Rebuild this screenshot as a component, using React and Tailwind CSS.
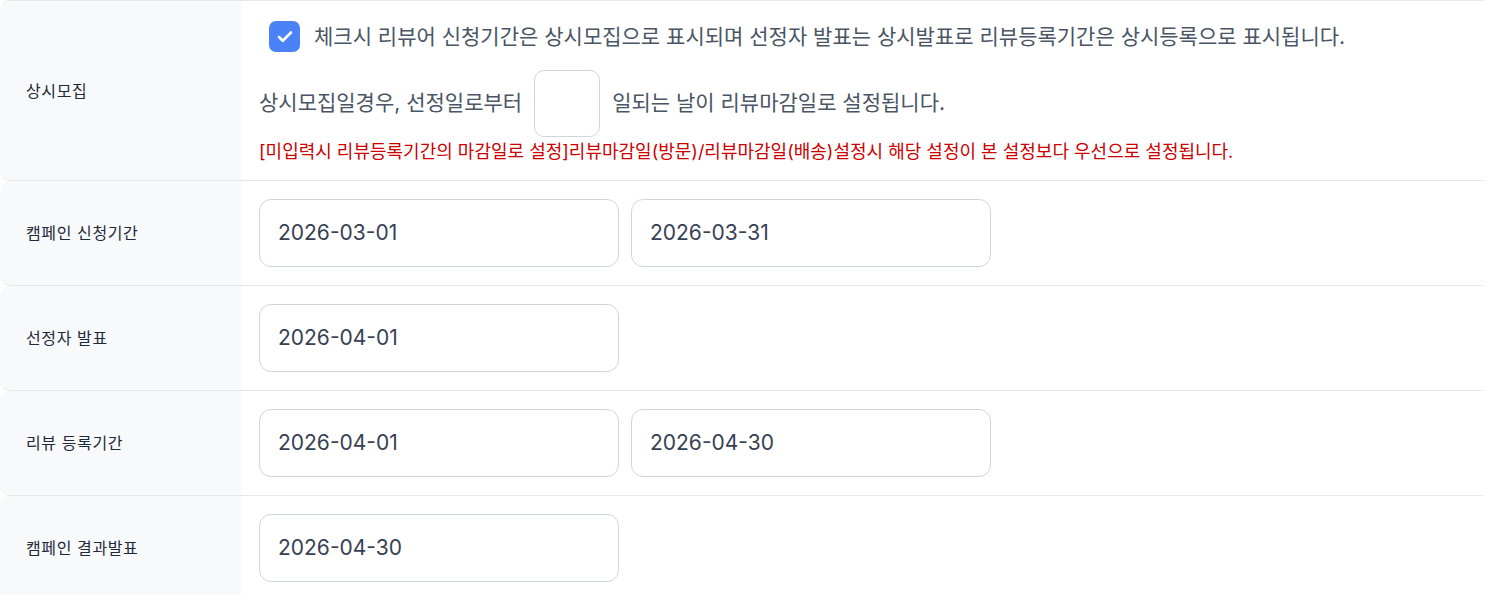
import { Check } from 'lucide-react'

const font = { fontFamily: 'Inter, "Noto Sans CJK KR", sans-serif' }

function DateBox({ value }) {
  return (
    <div className="w-[360px] h-[68px] flex items-center pl-[18px] border border-gray-300 rounded-xl bg-white text-[21px] text-gray-700">
      {value}
    </div>
  )
}

function Row({ label, children, first }) {
  return (
    <div className={`flex rounded-[10px] border-b border-gray-200 ${first ? 'border-t' : ''}`}>
      <div className="w-[241px] shrink-0 bg-[#f8f9fb] rounded-l-[10px] flex items-center pl-[26px] text-[16px] tracking-[0.6px] text-gray-800">
        {label}
      </div>
      <div className="flex-1 bg-white">{children}</div>
    </div>
  )
}

export default function App() {
  const dates = [
    { label: '캠페인 신청기간', values: ['2026-03-01', '2026-03-31'] },
    { label: '선정자 발표', values: ['2026-04-01'] },
    { label: '리뷰 등록기간', values: ['2026-04-01', '2026-04-30'] },
    { label: '캠페인 결과발표', values: ['2026-04-30'] },
  ]

  return (
    <div className="min-h-screen bg-white overflow-hidden" style={font}>
      <Row label="상시모집" first>
        <div className="h-[179px] pl-[18px] flex flex-col">
          <div className="flex items-center pt-[20px] pl-[10px]">
            <span className="w-[31px] h-[31px] shrink-0 rounded-[7px] bg-[#4b82f7] flex items-center justify-center">
              <Check className="w-[18px] h-[18px] text-white" strokeWidth={3.5} />
            </span>
            <span className="ml-[14px] text-[21px] text-gray-600 whitespace-nowrap">
              체크시 리뷰어 신청기간은 상시모집으로 표시되며 선정자 발표는 상시발표로 리뷰등록기간은 상시등록으로 표시됩니다.
            </span>
          </div>
          <div className="flex items-center mt-[17px] text-[21px] text-gray-600 whitespace-nowrap">
            <span>상시모집일경우, 선정일로부터</span>
            <div className="w-[66px] h-[67px] mx-[12px] border border-gray-300 rounded-[10px] bg-white" />
            <span>일되는 날이 리뷰마감일로 설정됩니다.</span>
          </div>
          <p className="mt-[1px] text-[18px] text-[#cc0000] whitespace-nowrap">
            [미입력시 리뷰등록기간의 마감일로 설정]리뷰마감일(방문)/리뷰마감일(배송)설정시 해당 설정이 본 설정보다 우선으로 설정됩니다.
          </p>
        </div>
      </Row>
      {dates.map((d) => (
        <Row key={d.label} label={d.label}>
          <div className="flex gap-[12px] py-[18px] pl-[18px]">
            {d.values.map((v) => (
              <DateBox key={v} value={v} />
            ))}
          </div>
        </Row>
      ))}
    </div>
  )
}
